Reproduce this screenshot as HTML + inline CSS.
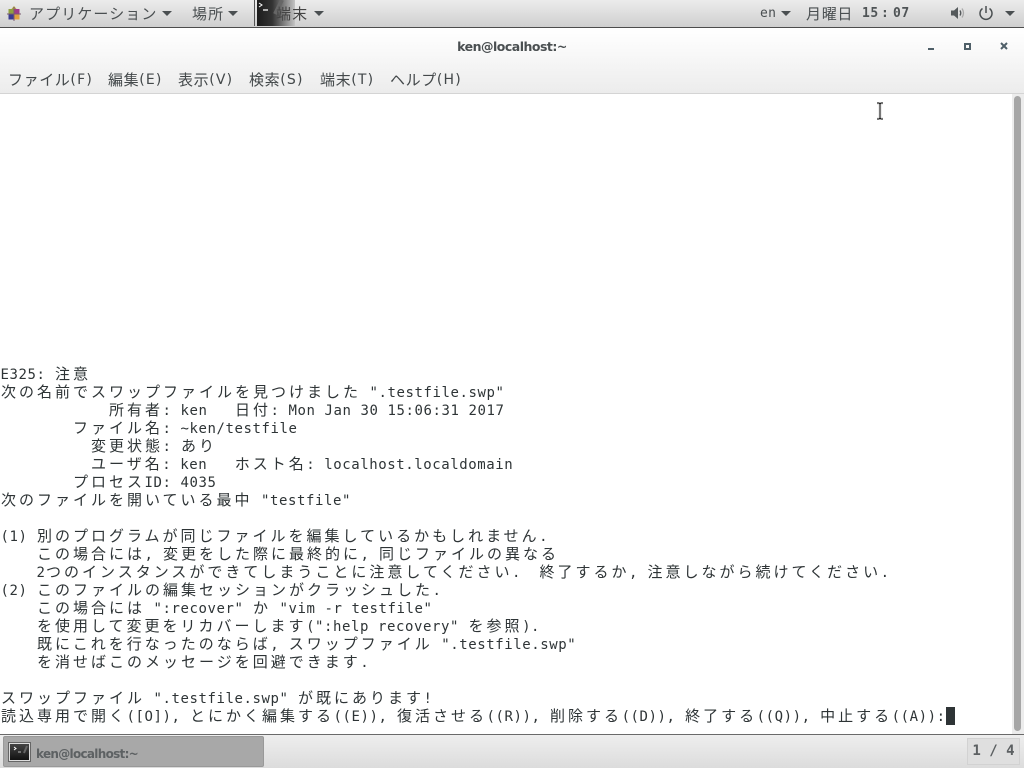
<!DOCTYPE html>
<html lang="ja"><head><meta charset="utf-8"><title>ken@localhost:~</title>
<style>
html,body{margin:0;padding:0;width:1024px;height:768px;overflow:hidden;background:#fff}
.a{position:absolute}
.ui{font-family:"DejaVu Sans","Noto Sans CJK JP",sans-serif;white-space:pre;color:#4a4f51}
#top{left:0;top:0;width:1024px;height:27px;background:linear-gradient(#ececec,#cfcfcf);border-bottom:1px solid #4c4c4c}
#title{left:0;top:28px;width:1024px;height:65px;background:linear-gradient(#fff,#fafafa 30%,#ececec);border-bottom:1px solid #d4d4d4}
#term{left:0;top:94px;width:1012px;height:640px;background:#fff}
#sb{left:1012px;top:94px;width:12px;height:640px;background:#ececec}
#th{left:1014px;top:96px;width:7px;height:635px;background:#a6a6a6;border-radius:4px}
#bot{left:0;top:734px;width:1024px;height:34px;background:linear-gradient(#eee,#dcdcdc);border-top:1px solid #6a6a6a;box-sizing:border-box}
.l{position:absolute;left:.5px;height:20px;font:14px/20px "DejaVu Sans Mono",monospace;letter-spacing:.57px;white-space:pre;color:#2e3436}
.l i{font:15px/18px "Noto Sans CJK JP",sans-serif;letter-spacing:3px;font-style:normal;vertical-align:top;position:relative;left:.5px}
.m{font-size:15px;top:71px;line-height:18px;letter-spacing:.6px;color:#43484a}
.m b{font:14px/18px "DejaVu Sans",sans-serif;font-weight:400;letter-spacing:1.2px;vertical-align:top}
.p{font-size:15px;top:5px;line-height:18px;letter-spacing:1.1px;color:#4a4f51}
.tri{width:0;height:0;border-left:5px solid transparent;border-right:5px solid transparent;border-top:5px solid #4a4f51}
</style></head><body>
<div class="a" id="top"></div>
<svg class="a" style="left:6px;top:6px" width="16" height="16" viewBox="0 0 16 16">
<path d="M8 0L10.500 3 8 7 5.500 3z" fill="#b0a040"/>
<rect x="2.500" y="3" width="5" height="5" fill="#8fa040"/>
<rect x="8.500" y="3" width="5" height="5" fill="#a03a88"/>
<rect x="2.500" y="8.500" width="5" height="5" fill="#3a3a90"/>
<rect x="8.500" y="8.500" width="5" height="5" fill="#e0a040"/>
<path d="M8 1L8 15M1 8L15 8" stroke="#7a5a70" stroke-width="1"/>
</svg>
<div class="a ui p" style="left:29px">アプリケーション</div>
<div class="a tri" style="left:162px;top:11px"></div>
<div class="a ui p" style="left:192px">場所</div>
<div class="a tri" style="left:228px;top:11px"></div>
<div class="a" style="left:254px;top:0;width:1px;height:26px;background:#555"></div>
<div class="a" style="left:257px;top:0;width:38px;height:26px;background:linear-gradient(90deg,#1c1c1c,#333 40%,#888 75%,#c4c4c4)"></div>
<svg class="a" style="left:257px;top:0" width="30" height="26"><path d="M2 3l3 2-3 2" fill="none" stroke="#fff" stroke-width="1"/><path d="M6 10h5" stroke="#ddd" stroke-width="1.500"/><path d="M18 14l7-14" stroke="#666" stroke-width="4"/></svg>
<div class="a ui p" style="left:276px;color:#444">端末</div>
<div class="a tri" style="left:314px;top:11px"></div>
<div class="a" style="left:760px;top:5px;font:13px/18px 'DejaVu Sans Mono',monospace;letter-spacing:.3px;color:#4a4f51;white-space:pre">en</div>
<div class="a tri" style="left:781px;top:11px"></div>
<div class="a ui p" style="left:806px;letter-spacing:.7px">月曜日</div>
<div class="a" style="left:862px;top:5px;font:bold 13px/18px 'DejaVu Sans Mono',monospace;letter-spacing:.5px;color:#4f5456;white-space:pre">15</div>
<div class="a" style="left:881px;top:5px;font:bold 13px/18px 'DejaVu Sans Mono',monospace;color:#4f5456;white-space:pre">:</div>
<div class="a" style="left:893px;top:5px;font:bold 13px/18px 'DejaVu Sans Mono',monospace;letter-spacing:.5px;color:#4f5456;white-space:pre">07</div>
<svg class="a" style="left:950px;top:5px" width="17" height="16" viewBox="0 0 17 16"><path d="M1 5.500h3l4-3.500v12l-4-3.500H1z" fill="#555a5c"/><path d="M10 5.500q1.500 2.500 0 5" fill="none" stroke="#555a5c" stroke-width="1.400"/><path d="M12 3.500q3 4.500 0 9" fill="none" stroke="#aaa" stroke-width="1.300"/></svg>
<svg class="a" style="left:978px;top:5px" width="16" height="16" viewBox="0 0 16 16"><path d="M4.500 3.500a6 6 0 1 0 7 0" fill="none" stroke="#4a4f51" stroke-width="1.500"/><path d="M8 1v7" stroke="#4a4f51" stroke-width="1.500"/></svg>
<div class="a tri" style="left:1005px;top:11px"></div>

<div class="a" id="title"></div>
<div class="a" style="left:0;top:38px;width:1024px;text-align:center;font:bold 12.500px/18px 'DejaVu Sans',sans-serif;letter-spacing:-.5px;color:#4a4f51">ken@localhost:~</div>
<div class="a" style="left:928px;top:48px;width:6px;height:2px;background:#4f5f68"></div>
<div class="a" style="left:964px;top:43px;width:7px;height:7px;border:2px solid #4f5f68;box-sizing:border-box"></div>
<svg class="a" style="left:1000px;top:42px" width="8" height="8"><path d="M1 1l6 6M7 1l-6 6" stroke="#4f5f68" stroke-width="2"/></svg>
<div class="a ui m" style="left:8px">ファイル<b>(F)</b></div>
<div class="a ui m" style="left:108px">編集<b>(E)</b></div>
<div class="a ui m" style="left:178px">表示<b>(V)</b></div>
<div class="a ui m" style="left:249px">検索<b>(S)</b></div>
<div class="a ui m" style="left:320px">端末<b>(T)</b></div>
<div class="a ui m" style="left:390px">ヘルプ<b>(H)</b></div>

<div class="a" id="term"></div>
<div class="l" style="top:365px">E325: <i>注意</i></div>
<div class="l" style="top:383px"><i>次の名前でスワップファイルを見つけました</i> ".testfile.swp"</div>
<div class="l" style="top:401px">            <i>所有者</i>: ken   <i>日付</i>: Mon Jan 30 15:06:31 2017</div>
<div class="l" style="top:419px">        <i>ファイル名</i>: ~ken/testfile</div>
<div class="l" style="top:437px">          <i>変更状態</i>: <i>あり</i></div>
<div class="l" style="top:455px">          <i>ユーザ名</i>: ken   <i>ホスト名</i>: localhost.localdomain</div>
<div class="l" style="top:473px">        <i>プロセス</i>ID: 4035</div>
<div class="l" style="top:491px"><i>次のファイルを開いている最中</i> "testfile"</div>
<div class="l" style="top:527px">(1) <i>別のプログラムが同じファイルを編集しているかもしれません</i>.</div>
<div class="l" style="top:545px">    <i>この場合には</i>, <i>変更をした際に最終的に</i>, <i>同じファイルの異なる</i></div>
<div class="l" style="top:563px">    2<i>つのインスタンスができてしまうことに注意してください</i>.  <i>終了するか</i>, <i>注意しながら続けてください</i>.</div>
<div class="l" style="top:581px">(2) <i>このファイルの編集セッションがクラッシュした</i>.</div>
<div class="l" style="top:599px">    <i>この場合には</i> ":recover" <i>か</i> "vim -r testfile"</div>
<div class="l" style="top:617px">    <i>を使用して変更をリカバーします</i>(":help recovery" <i>を参照</i>).</div>
<div class="l" style="top:635px">    <i>既にこれを行なったのならば</i>, <i>スワップファイル</i> ".testfile.swp"</div>
<div class="l" style="top:653px">    <i>を消せばこのメッセージを回避できます</i>.</div>
<div class="l" style="top:689px"><i>スワップファイル</i> ".testfile.swp" <i>が既にあります</i>!</div>
<div class="l" style="top:707px"><i>読込専用で開く</i>([O]), <i>とにかく編集する</i>((E)), <i>復活させる</i>((R)), <i>削除する</i>((D)), <i>終了する</i>((Q)), <i>中止する</i>((A)):</div>
<div class="a" style="left:946px;top:707px;width:9px;height:18px;background:#2e3436"></div>

<div class="a" id="sb"></div><div class="a" id="th"></div>
<svg class="a" style="left:875px;top:102px" width="10" height="18"><path d="M2 1h2l1 1 1-1h2M5 2v14M2 17h2l1-1 1 1h2" fill="none" stroke="#ddd" stroke-width="3"/><path d="M2 1h2l1 1 1-1h2M5 2v14M2 17h2l1-1 1 1h2" fill="none" stroke="#111" stroke-width="1"/></svg>

<div class="a" id="bot"></div>
<div class="a" style="left:3px;top:736px;width:261px;height:31px;background:#a8a8a8;border:1px solid #999;box-sizing:border-box;border-radius:2px"></div>
<div class="a" style="left:9px;top:743px;width:21px;height:18px;background:linear-gradient(#444,#111);border:1px solid #ddd;box-sizing:border-box;outline:1px solid #666"></div>
<svg class="a" style="left:10px;top:744px" width="19" height="16"><path d="M4 3l2 1.500-2 1.500" fill="none" stroke="#fff"/><path d="M8 8h3" stroke="#bbb"/><path d="M14 9l3-7" stroke="#666" stroke-width="2"/></svg>
<div class="a" style="left:36px;top:745px;font:bold 12px/18px 'DejaVu Sans',sans-serif;letter-spacing:-.7px;color:#5d6163;white-space:pre">ken@localhost:~</div>
<div class="a" style="left:967px;top:738px;width:53px;height:27px;background:#dfdfdf;border:1px solid #d2d2d2;box-sizing:border-box"></div>
<div class="a" style="left:967px;top:741px;width:53px;text-align:center;font:bold 14px/20px 'DejaVu Sans Mono',monospace;color:#5c6062;white-space:pre">1 / 4</div>
</body></html>
